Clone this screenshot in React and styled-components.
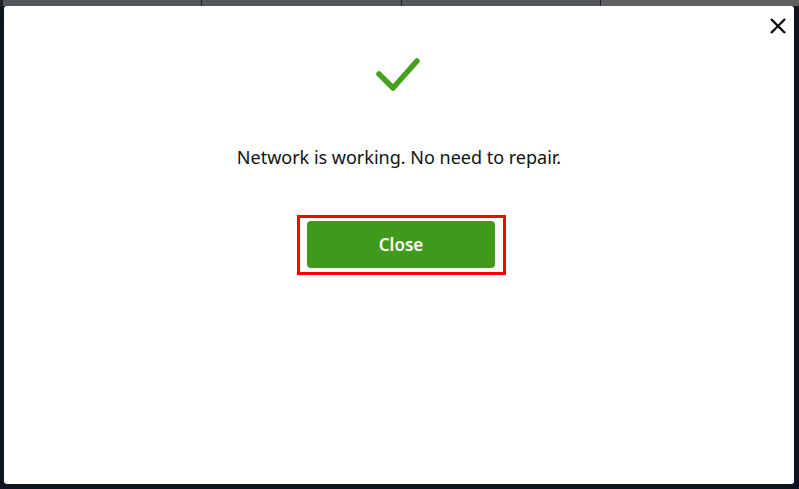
import React from 'react';
import styled, { createGlobalStyle } from 'styled-components';

const GlobalStyle = createGlobalStyle`
  html, body {
    margin: 0;
    padding: 0;
    background: #0f1520;
    font-family: "Noto Sans", "Open Sans", Arial, sans-serif;
  }
`;

/* 화면 전체 */
const Screen = styled.div`
  width: 799px;
  height: 489px;
  box-sizing: border-box;
  padding: 0 5px 5px 4px;
  display: flex;
  flex-direction: column;
  overflow: hidden;
`;

/* 뒤쪽 탭 줄 */
const TabStrip = styled.div`
  display: flex;
  height: 6px;
  margin: 0 -5px 0 -4px;
  padding-left: 3px;
  gap: 1px;
  background: #1f2329;
`;

const Tab = styled.div`
  flex: 1;
  background: ${(p) => (p.$active ? '#5f5f60' : '#54575c')};
`;

/* 모달 */
const Modal = styled.div`
  flex: 1;
  position: relative;
  background: #ffffff;
  border-radius: 3px;
  display: flex;
  flex-direction: column;
  align-items: center;
`;

const CloseX = styled.button`
  position: absolute;
  top: 8px;
  right: 4px;
  width: 24px;
  height: 24px;
  padding: 0;
  border: none;
  background: transparent;
  display: flex;
  align-items: center;
  justify-content: center;
  cursor: pointer;
`;

const CheckIcon = styled.svg`
  margin-top: 49px;
  margin-right: 3px;
`;

const Message = styled.div`
  margin-top: 50px;
  font-size: 18px;
  line-height: 24px;
  color: #111;
`;

const FocusRing = styled.div`
  margin-top: 46px;
  margin-left: 5px;
  padding: 3px 8px 4px 7px;
  border: 3px solid #ff0000;
`;

const CloseButton = styled.button`
  display: block;
  width: 188px;
  height: 47px;
  border: none;
  border-radius: 4px;
  background: #3f9a1c;
  color: #ffffff;
  font-family: "Noto Sans", "Open Sans", Arial, sans-serif;
  font-size: 17px;
  font-weight: 600;
  cursor: pointer;
`;

function App() {
  return (
    <Screen>
      <GlobalStyle />
      <TabStrip>
        <Tab />
        <Tab />
        <Tab />
        <Tab $active />
      </TabStrip>
      <Modal>
        <CloseX aria-label="close">
          <svg width="18" height="18" viewBox="0 0 18 18">
            <path d="M2 2 L16 16 M16 2 L2 16" stroke="#000" strokeWidth="2.2" fill="none" />
          </svg>
        </CloseX>
        <CheckIcon width="48" height="40" viewBox="0 0 48 40">
          <path
            d="M5 19 L19 33 L43 6"
            stroke="#46a020"
            strokeWidth="5.5"
            strokeLinecap="round"
            strokeLinejoin="round"
            fill="none"
          />
        </CheckIcon>
        <Message>Network is working. No need to repair.</Message>
        <FocusRing>
          <CloseButton>Close</CloseButton>
        </FocusRing>
      </Modal>
    </Screen>
  );
}

export default App;
